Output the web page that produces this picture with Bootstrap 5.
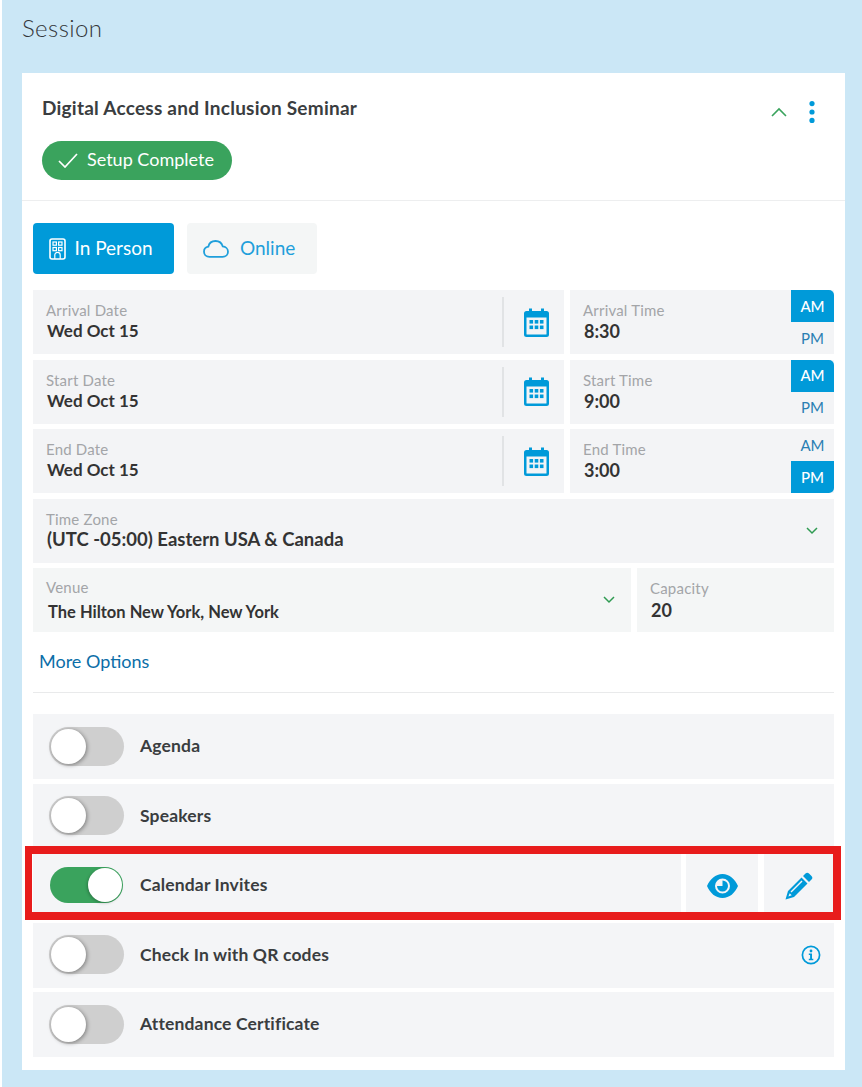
<!DOCTYPE html>
<html lang="en">
<head>
<meta charset="utf-8">
<title>Session</title>
<link href="https://cdn.jsdelivr.net/npm/bootstrap@5.3.0/dist/css/bootstrap.min.css" rel="stylesheet">
<style>
html,body{height:100%;}
body{background:#fff;font-family:"Lato","Open Sans",sans-serif;color:#333;padding-left:2px;overflow:hidden;}
.pane{background:#cbe7f6;height:1087px;padding:0 17px 17px 20px;}
.pane-title{font-size:24px;font-weight:300;line-height:30px;padding-top:13px;height:73px;color:#33363a;margin:0;letter-spacing:.4px;}
.sheet{background:#fff;height:997px;}
.sheet-head{height:128px;padding:23px 20px 0;border-bottom:1px solid #edeeef;}
.sheet-title{font-size:19px;font-weight:700;line-height:24px;color:#3a3d40;margin:0;letter-spacing:.24px;}
.done-pill{background:#3aa35d;color:#fff;width:190px;height:39px;border-radius:20px;margin-top:18px;font-size:18px;padding-left:16px;gap:9px;}
.done-pill span{margin-bottom:3px;}
.head-actions{gap:22px;margin-top:5px;margin-right:10px;height:22px;}
.sheet-body{padding:22px 11px 0;}
.mode-btn{height:51px;font-size:19px;border-radius:4px;border:0;padding:0 0 0 16px;justify-content:flex-start;}
.mode-on{width:141px;background:#009ad9;color:#fff;gap:8.5px;}
.mode-off{width:130px;margin-left:13px;background:#f4f6f6;color:#1f9fdb;gap:11px;}
.mode-on:hover{background:#009ad9;color:#fff;}
.mode-off:hover{background:#f4f6f6;color:#1f9fdb;}
.fields{margin-top:16px;display:flex;flex-direction:column;gap:5.5px;}
.frow{display:flex;gap:6px;height:64px;}
.fcell{background:#f3f4f6;height:64px;position:relative;display:flex;align-items:center;min-width:0;}
.fdate{width:531px;}
.ftime{width:264px;}
.fwide{width:801px;}
.fvenue{width:598px;background:#f4f6f6;}
.fcap{width:197px;background:#f4f6f6;}
.ftext{flex:1;padding-left:13px;line-height:20px;margin-top:-2px;}
.flabel{display:block;font-size:15px;color:#a3a5a8;line-height:20px;letter-spacing:.2px;}
.fvalue{display:block;font-size:18px;font-weight:700;color:#333;line-height:22px;padding-left:1px;}
.fvalue-date{font-size:17px;}
.fvalue-zone{font-size:18.5px;margin-top:-1px;}
.fvenue .ftext{margin-top:0;}
.fvenue-value{font-size:16.5px;margin-top:3.5px;padding-left:2px;}
.fvenue .chev{margin-right:16.5px;}
.fcap .ftext{margin-top:-1px;}
.fcap .fvalue{margin-top:1px;}
.cal-box{width:62px;height:50px;border-left:2px solid #e1e3e5;display:flex;align-items:center;justify-content:center;padding-left:5px;}
.ampm{width:43px;height:64px;display:flex;flex-direction:column;font-size:15px;}
.ampm span{height:32px;display:flex;align-items:center;justify-content:center;color:#2a7fb3;}
.ampm .ampm-on{background:#009ad9;color:#fff;font-weight:500;}
.ampm .ampm-top{border-top-right-radius:5px;}
.ampm .ampm-bot{border-bottom-right-radius:5px;}
.chev{margin-right:16px;}
.more-link{display:block;margin-top:17px;margin-left:6px;font-size:18px;line-height:24px;color:#0b6ea8;text-decoration:none;}
.sep{height:1px;background:#e9eaeb;margin:19px 0 21px;}
.toggles{display:flex;flex-direction:column;gap:4.5px;position:relative;}
.trow{height:65px;display:flex;gap:5px;}
.tcell{background:#f4f5f7;display:flex;align-items:center;height:65px;}
.tmain{flex:1;padding-left:16px;}
.tname{font-size:17.5px;font-weight:700;color:#3a3d40;margin-left:16px;letter-spacing:.15px;margin-bottom:.5px;}
.sw{width:75px;height:39px;border-radius:20px;background:#cfcfcf;position:relative;flex:none;margin-bottom:.5px;}
.sw::after{content:"";position:absolute;left:2px;top:2px;width:35px;height:35px;border-radius:50%;background:#fff;box-shadow:1px 1px 4px rgba(0,0,0,.4);}
.sw-on{background:#3aa35d;width:73px;height:36px;margin-left:1px;margin-right:1px;margin-bottom:1px;}
.sw-on::after{left:38px;top:1px;width:34px;height:34px;box-shadow:-1px 1px 3px rgba(0,0,0,.25);}
.tact{width:72px;justify-content:center;}
.tact-last{width:70px;margin-left:1px;}
.tinfo{margin-left:auto;margin-right:13px;}
.red-frame{position:absolute;left:-8px;right:-7px;top:132px;height:74px;border:8px solid #e81c1c;border-left-width:7px;pointer-events:none;}
</style>
</head>
<body>
<div class="pane">
  <h1 class="pane-title">Session</h1>
  <div class="sheet">
    <div class="sheet-head">
      <div class="d-flex justify-content-between align-items-start">
        <h2 class="sheet-title">Digital Access and Inclusion Seminar</h2>
        <div class="d-flex align-items-center head-actions">
          <svg width="16" height="10" viewBox="0 0 16 10"><path d="M1 9l7-7 7 7" fill="none" stroke="#3aa35d" stroke-width="1.6"/></svg>
          <svg width="6" height="22" viewBox="0 0 6 22"><circle cx="3" cy="2.6" r="2.6" fill="#009ad9"/><circle cx="3" cy="11" r="2.6" fill="#009ad9"/><circle cx="3" cy="19.4" r="2.6" fill="#009ad9"/></svg>
        </div>
      </div>
      <div class="done-pill d-flex align-items-center">
        <svg width="20" height="15" viewBox="0 0 20 15"><path d="M1 8l6 6L19 1" fill="none" stroke="#fff" stroke-width="1.7"/></svg>
        <span>Setup Complete</span>
      </div>
    </div>
    <div class="sheet-body">
      <div class="d-flex">
        <button type="button" class="btn mode-btn mode-on d-flex align-items-center">
          <svg width="17" height="22" viewBox="0 0 17 22"><rect x="1" y="1" width="15" height="20" rx="2" fill="none" stroke="#fff" stroke-width="1.6"/><g fill="none" stroke="#fff" stroke-width="1.2"><rect x="4" y="4" width="3.4" height="3.2"/><rect x="9.6" y="4" width="3.4" height="3.2"/><rect x="4" y="9.5" width="3.4" height="3.2"/><rect x="9.6" y="9.5" width="3.4" height="3.2"/><path d="M5.8 21v-4a2.7 2.7 0 0 1 5.4 0v4"/></g></svg>
          <span>In Person</span>
        </button>
        <button type="button" class="btn mode-btn mode-off d-flex align-items-center">
          <svg width="26" height="18" viewBox="0 0 26 18"><path d="M6.5 16.800C3.300 16.800 1 14.500 1 11.700c0-2.500 1.800-4.600 4.300-5C6.100 3.300 9 1 12.500 1c3.500 0 6.400 2.300 7.200 5.400 2.900.2 5.300 2.500 5.300 5.300 0 2.900-2.400 5.100-5.400 5.100z" fill="none" stroke="#1f9fdb" stroke-width="1.8"/></svg>
          <span>Online</span>
        </button>
      </div>
      <div class="fields">
        <div class="frow">
          <div class="fcell fdate"><div class="ftext"><span class="flabel">Arrival Date</span><span class="fvalue fvalue-date">Wed Oct 15</span></div><div class="cal-box"><svg width="25" height="29" viewBox="0 0 25 29"><path d="M2.500 3H5V0.500h3V3h9V0.500h3V3h2.500A2.500 2.500 0 0 1 25 5.500v21a2.500 2.500 0 0 1-2.500 2.500h-20A2.500 2.500 0 0 1 0 26.500v-21A2.500 2.500 0 0 1 2.500 3zM2.500 9.500v16.500a.5.5 0 0 0 .5.5h19a.5.5 0 0 0 .5-.5V9.500z" fill="#009ad9" fill-rule="evenodd"/><g fill="#009ad9"><rect x="5.500" y="12" width="3.600" height="3.600"/><rect x="10.700" y="12" width="3.600" height="3.600"/><rect x="15.900" y="12" width="3.600" height="3.600"/><rect x="5.500" y="17.500" width="3.600" height="3.600"/><rect x="10.700" y="17.500" width="3.600" height="3.600"/><rect x="15.900" y="17.500" width="3.600" height="3.600"/></g></svg></div></div>
          <div class="fcell ftime"><div class="ftext"><span class="flabel">Arrival Time</span><span class="fvalue">8:30</span></div><div class="ampm"><span class="ampm-on ampm-top">AM</span><span>PM</span></div></div>
        </div>
        <div class="frow">
          <div class="fcell fdate"><div class="ftext"><span class="flabel">Start Date</span><span class="fvalue fvalue-date">Wed Oct 15</span></div><div class="cal-box"><svg width="25" height="29" viewBox="0 0 25 29"><path d="M2.500 3H5V0.500h3V3h9V0.500h3V3h2.500A2.500 2.500 0 0 1 25 5.500v21a2.500 2.500 0 0 1-2.500 2.500h-20A2.500 2.500 0 0 1 0 26.500v-21A2.500 2.500 0 0 1 2.500 3zM2.500 9.500v16.500a.5.5 0 0 0 .5.5h19a.5.5 0 0 0 .5-.5V9.500z" fill="#009ad9" fill-rule="evenodd"/><g fill="#009ad9"><rect x="5.500" y="12" width="3.600" height="3.600"/><rect x="10.700" y="12" width="3.600" height="3.600"/><rect x="15.900" y="12" width="3.600" height="3.600"/><rect x="5.500" y="17.500" width="3.600" height="3.600"/><rect x="10.700" y="17.500" width="3.600" height="3.600"/><rect x="15.900" y="17.500" width="3.600" height="3.600"/></g></svg></div></div>
          <div class="fcell ftime"><div class="ftext"><span class="flabel">Start Time</span><span class="fvalue">9:00</span></div><div class="ampm"><span class="ampm-on ampm-top">AM</span><span>PM</span></div></div>
        </div>
        <div class="frow">
          <div class="fcell fdate"><div class="ftext"><span class="flabel">End Date</span><span class="fvalue fvalue-date">Wed Oct 15</span></div><div class="cal-box"><svg width="25" height="29" viewBox="0 0 25 29"><path d="M2.500 3H5V0.500h3V3h9V0.500h3V3h2.500A2.500 2.500 0 0 1 25 5.500v21a2.500 2.500 0 0 1-2.500 2.500h-20A2.500 2.500 0 0 1 0 26.500v-21A2.500 2.500 0 0 1 2.500 3zM2.500 9.500v16.500a.5.5 0 0 0 .5.5h19a.5.5 0 0 0 .5-.5V9.500z" fill="#009ad9" fill-rule="evenodd"/><g fill="#009ad9"><rect x="5.500" y="12" width="3.600" height="3.600"/><rect x="10.700" y="12" width="3.600" height="3.600"/><rect x="15.900" y="12" width="3.600" height="3.600"/><rect x="5.500" y="17.500" width="3.600" height="3.600"/><rect x="10.700" y="17.500" width="3.600" height="3.600"/><rect x="15.900" y="17.500" width="3.600" height="3.600"/></g></svg></div></div>
          <div class="fcell ftime"><div class="ftext"><span class="flabel">End Time</span><span class="fvalue">3:00</span></div><div class="ampm"><span>AM</span><span class="ampm-on ampm-bot">PM</span></div></div>
        </div>
        <div class="frow">
          <div class="fcell fwide"><div class="ftext"><span class="flabel">Time Zone</span><span class="fvalue fvalue-zone">(UTC -05:00) Eastern USA &amp; Canada</span></div><svg class="chev" width="12" height="8" viewBox="0 0 12 8"><path d="M1 1l5 5 5-5" fill="none" stroke="#2f9b52" stroke-width="1.500"/></svg></div>
        </div>
        <div class="frow">
          <div class="fcell fvenue"><div class="ftext"><span class="flabel">Venue</span><span class="fvalue fvenue-value">The Hilton New York, New York</span></div><svg class="chev" width="12" height="8" viewBox="0 0 12 8"><path d="M1 1l5 5 5-5" fill="none" stroke="#2f9b52" stroke-width="1.500"/></svg></div>
          <div class="fcell fcap"><div class="ftext"><span class="flabel">Capacity</span><span class="fvalue">20</span></div></div>
        </div>
      </div>
      <a class="more-link" href="#">More Options</a>
      <div class="sep"></div>
      <div class="toggles">
        <div class="trow"><div class="tcell tmain"><span class="sw"></span><span class="tname">Agenda</span></div></div>
        <div class="trow"><div class="tcell tmain"><span class="sw"></span><span class="tname">Speakers</span></div></div>
        <div class="trow">
          <div class="tcell tmain"><span class="sw sw-on"></span><span class="tname">Calendar Invites</span></div>
          <div class="tcell tact"><svg width="31" height="24" viewBox="0 0 31 24"><path fill-rule="evenodd" fill="#009ad9" d="M15.500 0C22.500 0 28 5 31 12c-3 7-8.500 12-15.500 12S3 19 0 12C3 5 8.500 0 15.500 0zM15.500 4.500a7.500 7.500 0 1 0 0 15 7.500 7.500 0 0 0 0-15z"/><path fill="#009ad9" d="M15.500 6.500a5.500 5.500 0 1 1-5.500 5.500h5.500z"/></svg></div>
          <div class="tcell tact tact-last"><svg width="28" height="28" viewBox="0 0 28 28"><path fill="#009ad9" fill-rule="evenodd" d="M20.500 1.500a2.500 2.500 0 0 1 3.500 0l2.500 2.500a2.500 2.500 0 0 1 0 3.500L24 10l-6-6zM16.500 5.500l6 6L9 25 0.500 27.500 3 19zM16.500 8.500L5.500 19.500l1 1L17.500 9.500zM4.700 21.300l-1.300 3.300 3.300-1.300z"/></svg></div>
        </div>
        <div class="trow"><div class="tcell tmain"><span class="sw"></span><span class="tname">Check In with QR codes</span><svg class="tinfo" width="20" height="20" viewBox="0 0 20 20"><circle cx="10" cy="10" r="8.600" fill="none" stroke="#009ad9" stroke-width="1.700"/><circle cx="10" cy="6" r="1.400" fill="#009ad9"/><path fill="#009ad9" d="M7.800 8.500h3.200v5.300h1.300v1.500H7.800v-1.500h1.300V10H7.800z"/></svg></div></div>
        <div class="trow"><div class="tcell tmain"><span class="sw"></span><span class="tname">Attendance Certificate</span></div></div>
        <div class="red-frame"></div>
      </div>
    </div>
  </div>
</div>
<script src="https://cdn.jsdelivr.net/npm/bootstrap@5.3.0/dist/js/bootstrap.bundle.min.js"></script>
</body>
</html>
